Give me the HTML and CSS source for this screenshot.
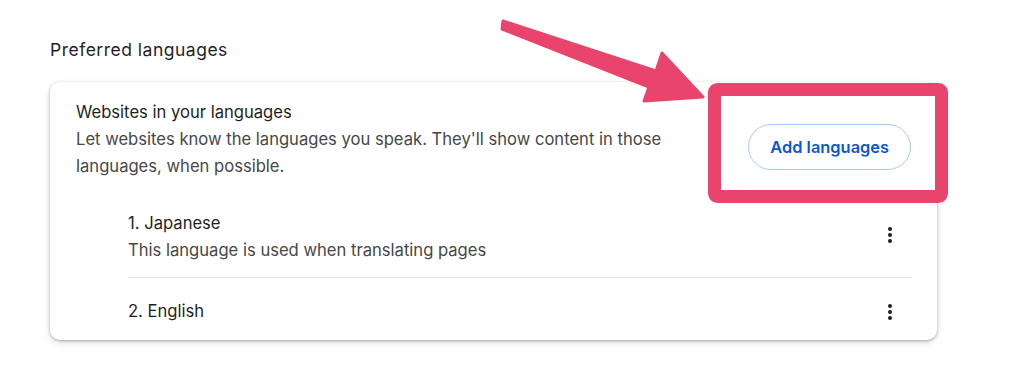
FILE: index.html
```html
<!DOCTYPE html>
<html lang="en">
<head>
  <meta charset="UTF-8" />
  <title>Languages</title>
  <link rel="stylesheet" href="styles.css">
</head>
<body>
  <div class="page">
    <h2 class="section-title">Preferred languages</h2>
    <div class="card">
      <div class="card-header">
        <div class="header-text">
          <div class="label">Websites in your languages</div>
          <div class="sublabel">Let websites know the languages you speak. They'll show content in those languages, when possible.</div>
        </div>
        <button class="add-btn" type="button">Add languages</button>
      </div>
      <ul class="lang-list">
        <li class="lang-row">
          <div class="lang-text">
            <div class="label">1. Japanese</div>
            <div class="sublabel">This language is used when translating pages</div>
          </div>
          <button class="more-btn" type="button" aria-label="More actions">
            <svg width="4" height="16" viewBox="0 0 4 16"><circle cx="2" cy="2" r="2"/><circle cx="2" cy="8" r="2"/><circle cx="2" cy="14" r="2"/></svg>
          </button>
        </li>
        <li class="lang-row">
          <div class="lang-text">
            <div class="label">2. English</div>
          </div>
          <button class="more-btn" type="button" aria-label="More actions">
            <svg width="4" height="16" viewBox="0 0 4 16"><circle cx="2" cy="2" r="2"/><circle cx="2" cy="8" r="2"/><circle cx="2" cy="14" r="2"/></svg>
          </button>
        </li>
      </ul>
    </div>

    <!-- annotation drawn over the screenshot -->
    <svg class="annotation" width="1024" height="384" viewBox="0 0 1024 384">
      <polygon points="503,21 656,71 662,53 703,97 644,101 649,87 502,29" fill="#e8446c" stroke="#e8446c" stroke-width="3" stroke-linejoin="round"/>
      <rect x="714.5" y="89.5" width="227" height="107" rx="3" fill="none" stroke="#e8446c" stroke-width="13"/>
    </svg>
  </div>
</body>
</html>
```

FILE: styles.css
```css
*, *::before, *::after { box-sizing: border-box; }
body {
  margin: 0;
  background: #fff;
  font-family: Inter, 'Liberation Sans', sans-serif;
  color: #1f1f1f;
}
.page {
  position: relative;
  width: 1024px;
  height: 384px;
  padding: 38px 0 0 50px;
}
.section-title {
  margin: 0 0 20px;
  font-size: 17.5px;
  font-weight: 400;
  letter-spacing: 0.5px;
  line-height: 24px;
  color: #1f1f1f;
}
.card {
  width: 887px;
  background: #fff;
  border-radius: 10px;
  box-shadow: 0 1px 3px rgba(0,0,0,0.3), 0 3px 8px rgba(0,0,0,0.1);
}
.card-header {
  display: flex;
  align-items: flex-start;
  gap: 40px;
  padding: 17px 26px 16px;
}
.header-text {
  flex: 1;
}
.label {
  font-size: 16.6px;
  line-height: 27px;
  color: #1f1f1f;
}
.sublabel {
  font-size: 16.6px;
  line-height: 27px;
  color: #474747;
}
.add-btn {
  margin-top: 25px;
  height: 46px;
  padding: 0 21px;
  border: 1px solid #a8c7fa;
  border-radius: 23px;
  background: #fff;
  color: #0b57d0;
  font-family: inherit;
  font-size: 16.4px;
  font-weight: 600;
  cursor: pointer;
}
.lang-list {
  list-style: none;
  margin: 0;
  padding: 0 25px 0 78px;
}
.lang-row {
  display: flex;
  align-items: center;
  padding: 14px 0 13px;
}
.lang-row + .lang-row {
  border-top: 1px solid #e3e3e3;
  padding: 20px 0 15px;
}
.lang-text {
  flex: 1;
}
.more-btn {
  width: 44px;
  height: 26px;
  display: flex;
  align-items: center;
  justify-content: center;
  border: none;
  background: none;
  padding: 0;
  fill: #1f1f1f;
  cursor: pointer;
}
.lang-row:first-child .more-btn {
  margin-top: -4px;
}
.annotation {
  position: absolute;
  left: 0;
  top: 0;
  pointer-events: none;
}
```
